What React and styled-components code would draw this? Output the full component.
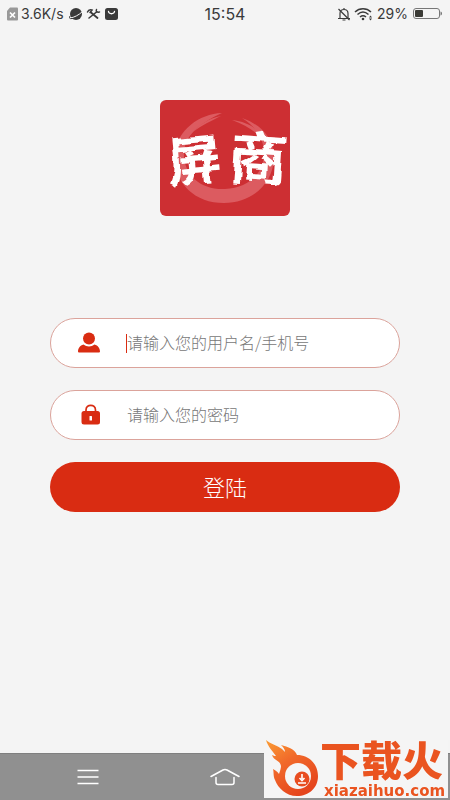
import React from 'react'
import styled, { createGlobalStyle } from 'styled-components'

const GlobalStyle = createGlobalStyle`
  * {
    box-sizing: border-box;
  }

  body {
    margin: 0;
    background-color: #f4f4f4;
    font-family: 'Inter', 'Noto Sans CJK SC', sans-serif;
  }
`

const Page = styled.div`
  min-height: 100vh;
  display: flex;
  flex-direction: column;
  background-color: #f4f4f4;
`

const StatusBar = styled.header`
  display: grid;
  grid-template-columns: 1fr auto 1fr;
  align-items: center;
  height: 28px;
  padding: 0 7px;
  color: #3a3a3a;
  font-size: 14px;
  line-height: 28px;
`

const StatusGroup = styled.div`
  display: flex;
  align-items: center;
  justify-content: ${(props) => (props.$end ? 'flex-end' : 'flex-start')};
  gap: 3px;

  svg {
    display: block;
    flex: none;
  }
`

const StatusText = styled.span`
  margin-right: 2px;
`

const Clock = styled.time`
  font-size: 16px;
`

const Main = styled.main`
  flex: 1;
  display: flex;
  flex-direction: column;
  align-items: center;
  padding: 72px 50px 0;
`

const Logo = styled.svg`
  display: block;
  width: 130px;
  height: 116px;
`

const LoginForm = styled.form`
  width: 100%;
  display: flex;
  flex-direction: column;
  gap: 22px;
  margin-top: 102px;
`

const Field = styled.label`
  display: flex;
  align-items: center;
  height: 50px;
  padding: 0 27px;
  border: 1px solid #dba39b;
  border-radius: 25px;
  background-color: #ffffff;
`

const FieldIcon = styled.svg`
  flex: none;
  width: 22px;
  height: 22px;
  margin-right: 26px;
`

const Caret = styled.span`
  flex: none;
  width: 1px;
  height: 19px;
  background-color: ${(props) => (props.$active ? '#d92c12' : 'transparent')};
`

const Input = styled.input`
  flex: 1;
  min-width: 0;
  height: 26px;
  padding: 0 0 2px;
  border: none;
  outline: none;
  background: transparent;
  color: #333333;
  font-family: 'Noto Sans CJK SC', sans-serif;
  font-size: 16px;
  font-weight: 300;
  line-height: 24px;

  &::placeholder {
    color: #777777;
    opacity: 1;
  }
`

const LoginButton = styled.button`
  height: 50px;
  padding: 0 0 2px;
  border: none;
  border-radius: 25px;
  background-color: #d92c12;
  color: #ffffff;
  font-family: 'Noto Sans CJK SC', sans-serif;
  font-size: 22px;
  font-weight: 300;
  line-height: 48px;
  cursor: pointer;
`

const NavBar = styled.nav`
  display: grid;
  grid-template-columns: 1fr auto 1fr;
  align-items: center;
  height: 47px;
  padding: 0 74px;
  border-top: 1px solid #7f7f7f;
  background-color: #909090;
`

const NavButton = styled.button`
  justify-self: start;
  padding: 0;
  border: none;
  background: transparent;
  cursor: pointer;

  svg {
    display: block;
  }
`

const Watermark = styled.div`
  position: fixed;
  right: 2px;
  bottom: 2px;
  display: flex;
  width: 184px;
  height: 58px;
  background-color: #f5f5f5;
`

const Flame = styled.svg`
  flex: none;
  width: 56px;
  height: 58px;
`

const WatermarkText = styled.div`
  display: flex;
  flex-direction: column;
  align-items: flex-start;
  color: #ea5420;
`

const WatermarkName = styled.span`
  font-family: 'Liberation Sans', 'Noto Sans CJK SC', sans-serif;
  font-size: 41px;
  font-weight: 900;
  line-height: 44px;
  white-space: nowrap;
`

const WatermarkUrl = styled.span`
  padding-left: 4px;
  font-family: 'DejaVu Sans', sans-serif;
  font-size: 15px;
  font-weight: 700;
  line-height: 14px;
`

const SimIcon = () => (
  <svg width='11' height='14' viewBox='0 0 11 14'>
    <path d='M3 0.5H10a1 1 0 0 1 1 1V12.5a1 1 0 0 1-1 1H1a1 1 0 0 1-1-1V4z' fill='#999999' />
    <path d='M3 5.5l5 5M8 5.5l-5 5' stroke='#ffffff' strokeWidth='1.7' />
  </svg>
)

const PlanetIcon = () => (
  <svg width='14' height='14' viewBox='0 0 14 14'>
    <circle cx='7' cy='7' r='6' fill='#3a3a3a' />
    <path d='M1 11C5 10.5 10 8 13.5 4.5' fill='none' stroke='#f4f4f4' strokeWidth='1' />
    <path d='M1 9C0 11 0.5 12 3 11.5' fill='none' stroke='#3a3a3a' strokeWidth='1' />
  </svg>
)

const ToolsIcon = () => (
  <svg width='15' height='14' viewBox='0 0 15 14' fill='none' stroke='#3a3a3a' strokeLinecap='round'>
    <path d='M5 5.5L11.5 11' strokeWidth='1.8' />
    <path d='M3 11L10.5 5' strokeWidth='1.6' />
    <path d='M1.5 5C2.5 2.5 4.5 2.5 6 3L4 5.5M10.5 2.5C9.5 4.5 11 5.5 13.5 5' strokeWidth='1.5' />
  </svg>
)

const BagIcon = () => (
  <svg width='15' height='14' viewBox='0 0 15 14'>
    <rect x='1' y='1' width='13' height='12' rx='2.5' fill='#3a3a3a' />
    <path d='M4.5 4.5c0.5 3 5.5 3 6 0' fill='none' stroke='#ffffff' strokeWidth='1.3' strokeLinecap='round' />
  </svg>
)

const BellOffIcon = () => (
  <svg width='14' height='15' viewBox='0 0 14 15' fill='none' stroke='#3a3a3a' strokeWidth='1.2'>
    <path d='M3 11.5V6.5C3 3.5 4.5 2.5 7 2.5S11 3.5 11 6.5V11.5M1 11.5H13M5.5 13H8.5M7 2.5V1' />
    <path d='M1.5 2L12.5 13' />
  </svg>
)

const WifiIcon = () => (
  <svg width='20' height='14' viewBox='0 0 20 14' fill='none' stroke='#3a3a3a' strokeWidth='1.5'>
    <path d='M1 5C5.5 0.8 12.5 0.8 17 5M3.5 7.5C7 4.3 11 4.3 14.5 7.5M6 10C8 8.3 10 8.3 12 10' />
    <circle cx='9' cy='12' r='1.3' fill='#3a3a3a' stroke='none' />
    <path d='M15 10.5L16.5 8.5L18 10.5zM15 11.5L16.5 13.5L18 11.5z' fill='#3a3a3a' stroke='none' />
  </svg>
)

const BatteryIcon = () => (
  <svg width='30' height='12' viewBox='0 0 30 12'>
    <rect x='0.5' y='0.5' width='26' height='10' rx='2.5' fill='none' stroke='#777777' />
    <rect x='2' y='2' width='8' height='7' rx='1' fill='#3a3a35' />
    <path d='M27.5 3.5c2 0.5 2 3.5 0 4z' fill='#777777' />
  </svg>
)

const BrandLogo = () => (
  <Logo viewBox='0 0 130 116' role='img' aria-label='屏商'>
    <defs>
      <filter id='brush' x='-10%' y='-10%' width='120%' height='120%'>
        <feTurbulence type='fractalNoise' baseFrequency='0.06' numOctaves='1' seed='4' result='noise' />
        <feDisplacementMap in='SourceGraphic' in2='noise' scale='7' xChannelSelector='R' yChannelSelector='G' />
      </filter>
    </defs>
    <rect width='130' height='116' rx='6' fill='#cd2f33' />
    <g fill='#dc5b60'>
      <path d='M62 13C39 14 17 30 15 54C13 82 34 103 64 103C92 103 113 84 114 58C114 39 102 25 82 18C96 27 104 39 104 53C104 73 89 88 65 89C41 90 25 76 24 56C23 37 38 24 62 13z' />
      <path d='M61 16C50 18 38 25 33 32C42 25 51 21 61 16z' />
      <path d='M72 20C91 22 104 33 108 46C100 34 88 26 72 20z' />
    </g>
    <g
      fill='#ffffff'
      fontFamily="'Noto Sans CJK SC', sans-serif"
      fontWeight='700'
      textAnchor='middle'
      filter='url(#brush)'
    >
      <text x='34' y='80' fontSize='54' transform='rotate(-5 34 60)'>屏</text>
      <text x='98' y='80' fontSize='58' transform='rotate(4 98 60)'>商</text>
    </g>
  </Logo>
)

const UserIcon = () => (
  <FieldIcon viewBox='0 0 22 22' fill='#d92c12' aria-hidden='true'>
    <circle cx='11' cy='6.5' r='6' />
    <path d='M5.5 12.5C8.5 15 13.5 15 16.5 12.5C20 13.5 22 16.5 22 19.5Q22 20.5 21 20.5H1Q0 20.5 0 19.5C0 16.5 2 13.5 5.5 12.5z' />
  </FieldIcon>
)

const LockIcon = () => (
  <FieldIcon viewBox='0 0 22 22' aria-hidden='true'>
    <path d='M8 8V6C8 -0.2 17.5 -0.2 17.5 6V8' fill='none' stroke='#d92c12' strokeWidth='1.7' />
    <rect x='3.5' y='7' width='18.5' height='13.5' rx='2.5' fill='#d92c12' />
    <rect x='11.5' y='12' width='2.5' height='4.5' rx='0.5' fill='#ffffff' />
  </FieldIcon>
)

const FlameLogo = () => (
  <Flame viewBox='0 0 56 58' aria-hidden='true'>
    <defs>
      <linearGradient id='flame' x1='0' y1='0' x2='0.6' y2='1'>
        <stop offset='0' stopColor='#fb9d35' />
        <stop offset='0.45' stopColor='#f1692a' />
        <stop offset='1' stopColor='#e5451d' />
      </linearGradient>
    </defs>
    <path
      d='M2 0C6 4 13 5 18 9C19 10 20 11 21 12C21 9 19 7 17 5C24 7 31 9 33 15C46 15 54 25 54 36C54 48 45 56 33 56C22 56 14 48 11 40C9 36 10 32 9 29C12 31 14 32 15 34C16 31 17 28 17 26C16 20 10 21 8 15C10 16 11 16 12 16C8 10 4 7 2 0z'
      fill='url(#flame)'
    />
    <circle cx='34' cy='36' r='13' fill='#f5f5f5' />
    <circle cx='38' cy='39' r='7.5' fill='#e84d20' />
    <path d='M38 34V39M35.5 38L38 40.5L40.5 38M34 43H42' fill='none' stroke='#ffffff' strokeWidth='1.6' />
  </Flame>
)

const App = () => {
  return (
    <>
      <GlobalStyle />
      <Page>
        <StatusBar>
          <StatusGroup>
            <SimIcon />
            <StatusText>3.6K/s</StatusText>
            <PlanetIcon />
            <ToolsIcon />
            <BagIcon />
          </StatusGroup>
          <Clock>15:54</Clock>
          <StatusGroup $end>
            <BellOffIcon />
            <WifiIcon />
            <StatusText>29%</StatusText>
            <BatteryIcon />
          </StatusGroup>
        </StatusBar>

        <Main>
          <BrandLogo />
          <LoginForm onSubmit={(e) => e.preventDefault()}>
            <Field>
              <UserIcon />
              <Caret $active />
              <Input type='text' name='username' placeholder='请输入您的用户名/手机号' />
            </Field>
            <Field>
              <LockIcon />
              <Caret />
              <Input type='password' name='password' placeholder='请输入您的密码' />
            </Field>
            <LoginButton type='submit'>登陆</LoginButton>
          </LoginForm>
        </Main>

        <NavBar>
          <NavButton type='button' aria-label='Menu'>
            <svg width='28' height='20' viewBox='0 0 28 20' stroke='#ffffff' strokeWidth='1.5'>
              <path d='M3.5 3.5H24.5M3.5 10H24.5M3.5 16.5H24.5' />
            </svg>
          </NavButton>
          <NavButton type='button' aria-label='Home'>
            <svg width='30' height='20' viewBox='0 0 30 20' fill='none' stroke='#ffffff' strokeWidth='1.5' strokeLinecap='round' strokeLinejoin='round'>
              <path d='M1 9.5L13 3Q15 2 17 3L29 9.5M6 10.5V15.5Q6 17.5 8 17.5H22Q24 17.5 24 15.5V10.5' />
            </svg>
          </NavButton>
        </NavBar>
      </Page>

      <Watermark>
        <FlameLogo />
        <WatermarkText>
          <WatermarkName>下载火</WatermarkName>
          <WatermarkUrl>xiazaihuo.com</WatermarkUrl>
        </WatermarkText>
      </Watermark>
    </>
  )
}

export default App
